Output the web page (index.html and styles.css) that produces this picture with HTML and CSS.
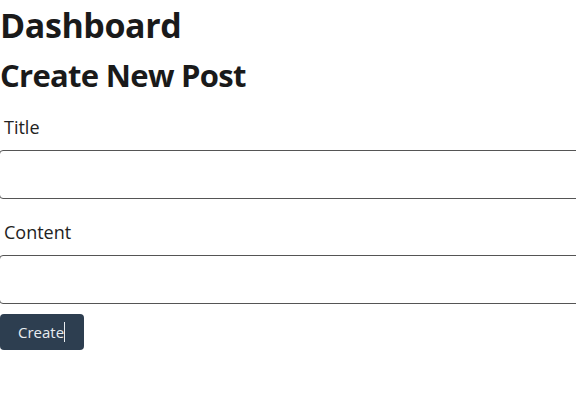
FILE: index.html
```html
<!DOCTYPE html>
<html lang="en">
<head>
<meta charset="utf-8">
<title>Dashboard</title>
<link rel="stylesheet" href="styles.css">
</head>
<body>
<h1 class="page-title">Dashboard</h1>
<h2 class="section-title">Create New Post</h2>
<form class="post-form">
  <div class="field">
    <label class="field-label" for="title">Title</label>
    <input class="field-input" id="title" type="text">
  </div>
  <div class="field">
    <label class="field-label" for="content">Content</label>
    <input class="field-input" id="content" type="text">
  </div>
  <button class="btn-create" type="button">Create<span class="caret"></span></button>
</form>
</body>
</html>
```

FILE: styles.css
```css
html, body {
  margin: 0;
  padding: 0;
  background: #ffffff;
  overflow: hidden;
}
body {
  font-family: "Open Sans", "Noto Sans", sans-serif;
  color: #1a1a1a;
}
.page-title {
  margin: 0;
  font-size: 34px;
  font-weight: 700;
  line-height: 50px;
  letter-spacing: -0.4px;
}
.section-title {
  margin: 0;
  font-size: 31px;
  font-weight: 700;
  line-height: 50px;
  letter-spacing: -0.7px;
}
.post-form {
  display: flex;
  flex-direction: column;
  align-items: flex-start;
  gap: 10px;
  padding-top: 4px;
}
.field {
  display: flex;
  flex-direction: column;
  align-items: flex-start;
}
.field-label {
  padding-left: 4px;
  font-size: 18px;
  line-height: 46px;
  color: #222;
}
.field-input {
  box-sizing: border-box;
  width: 600px;
  height: 49px;
  margin: 0 0 0 -1px;
  border: 1px solid #555;
  border-radius: 4px;
  background: #fff;
}
.btn-create {
  margin-top: 0;
  height: 36px;
  padding: 0 19px 0 18px;
  border: none;
  border-radius: 4px;
  background: #2d3e50;
  color: #e8ecf0;
  font-family: inherit;
  font-size: 15px;
  display: flex;
  align-items: center;
}
.caret {
  display: inline-block;
  width: 1px;
  height: 20px;
  background: #e8ecf0;
}
```
